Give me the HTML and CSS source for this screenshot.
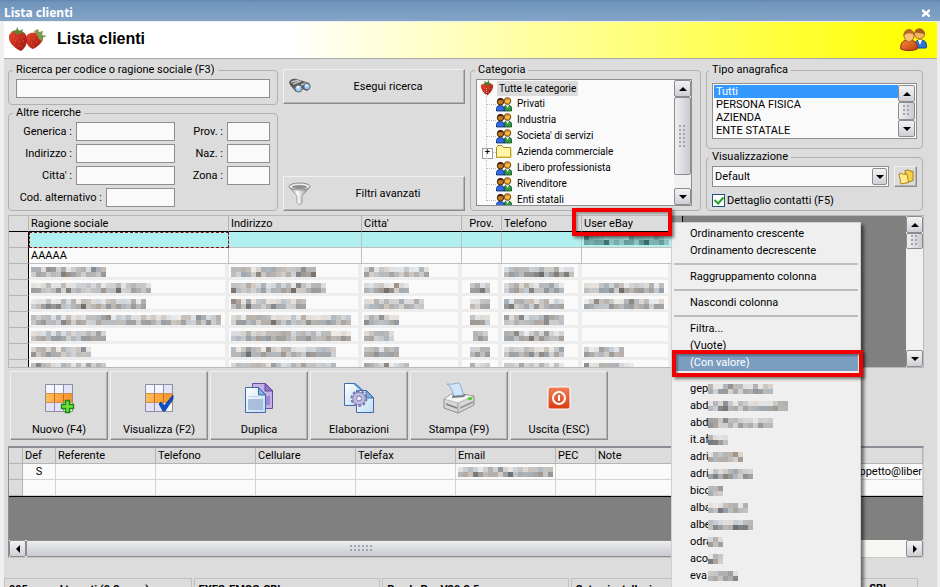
FILE: index.html
```html
<!DOCTYPE html>
<html lang="it">
<head>
<meta charset="utf-8">
<title>Lista clienti</title>
<link rel="stylesheet" href="styles.css">
</head>
<body>
<svg class="defs" aria-hidden="true">
  <defs>
    <linearGradient id="berry" x1="0" y1="0" x2="1" y2="1"><stop offset="0" stop-color="#e8492c"/><stop offset="1" stop-color="#9c1410"/></linearGradient>
    <linearGradient id="org" x1="0" y1="0" x2="1" y2="1"><stop offset="0" stop-color="#f58a3c"/><stop offset="1" stop-color="#c23c0c"/></linearGradient>
    <linearGradient id="cell" x1="0" y1="0" x2="1" y2="0"><stop offset="0" stop-color="#ffbf5a"/><stop offset="1" stop-color="#f98f2a"/></linearGradient>
    <linearGradient id="page" x1="0" y1="0" x2="1" y2="1"><stop offset="0" stop-color="#ffffff"/><stop offset="1" stop-color="#bcdcf5"/></linearGradient>
    <linearGradient id="metal" x1="0" y1="0" x2="1" y2="0"><stop offset="0" stop-color="#888"/><stop offset=".4" stop-color="#fff"/><stop offset="1" stop-color="#777"/></linearGradient>
    <linearGradient id="power" x1="0" y1="0" x2="0" y2="1"><stop offset="0" stop-color="#f0805c"/><stop offset="1" stop-color="#d93a10"/></linearGradient>
    <symbol id="i-people" viewBox="0 0 16 16">
      <path d="M8 15V12c0-2 1.500-3 3.500-3s4 1 4 3v3z" fill="#2f9a3c" stroke="#134a1c" stroke-width=".8"/>
      <path d="M10 9l1.500 3L13 9z" fill="#fff"/>
      <circle cx="11.500" cy="5" r="3.300" fill="#f5b23c" stroke="#5a3606" stroke-width=".9"/>
      <path d="M8.200 4c.5-3 6-3.500 6.600 0-2-1.200-4.500-1-6.600 0z" fill="#b87414"/>
      <path d="M.5 15v-2.500C.5 10.500 2 9.500 4.200 9.500s4 1 4 3V15z" fill="#2f6be8" stroke="#10246a" stroke-width=".8"/>
      <circle cx="4.500" cy="5.800" r="3.200" fill="#c4761c" stroke="#2c1804" stroke-width=".9"/>
      <path d="M1.200 5c.2-3.800 6-4 6.600-.4-2-.9-4.500-.7-6.600.4z" fill="#3c2208"/>
    </symbol>
    <symbol id="i-berry" viewBox="0 0 14 16">
      <path d="M1 5c2-2 10-2 12 0 1 3-2.500 8.500-6 10.500C3.500 13.500 0 8 1 5z" fill="url(#berry)"/>
      <path d="M2 4.500l3-1.500-1-2 3 1.500L9 0l.3 3 3 1-3 .3L7 6 5.500 4.500z" fill="#4b7a2c"/>
      <path d="M4 8h1M8 8h1M6 10.500h1M10 9h1M4 11h1M8 12.500h1" stroke="#e06a50" stroke-width=".8"/>
    </symbol>
    <symbol id="i-grid" viewBox="0 0 28 28">
      <path d="M.5.500h27v27H.500z" fill="#f4f5ff"/>
      <path d="M18 1h9v8h-9zM1 19h9v8H1zM10 19h9v8h-9z" fill="#e2e3fa"/>
      <path d="M.500 9.500h27v9H.500z" fill="url(#cell)"/>
      <path d="M9.500 10v8M18.500 10v8" stroke="#c86a10"/>
      <path d="M.5.500h27v27H.500zM9.500 1v8M18.500 1v8M9.500 19v8M18.500 19v8" fill="none" stroke="#8e8e9c"/>
      <path d="M0 9.500h28M0 18.500h28" stroke="#c89058"/>
    </symbol>
  </defs>
</svg>

<div class="window">
  <header class="titlebar">
    <span>Lista clienti</span>
    <button class="close" aria-label="Chiudi"><svg width="8" height="8" viewBox="0 0 8 8"><path d="M0 1l8 6.500M8 1l-8 6.500" stroke="#fff" stroke-width="2.400"/></svg></button>
  </header>

  <main class="client">
    <div class="banner">
      <svg width="38" height="26" viewBox="0 0 38 26" aria-hidden="true">
        <path d="M18 9c4-4 14-3 16 1 1 5-5 11-10 13-5-1-9-9-6-14z" fill="url(#berry)"/>
        <path d="M25 5l4-2 1 3 4-1-1 4 5 1-5 2 1 4-4-3-2-4z" fill="#7f9a4c"/>
        <path d="M0 10c2-7 14-7 17-1 3 6 0 12-5 16C7 23-1 17 0 10z" fill="url(#berry)"/>
        <path d="M2 6l4-2 1 1 1-4 2 4 4-2-1 3 4 3-5-2-3 2-2-2z" fill="#5c8434"/>
        <path d="M4 11h1M8 12h1M13 11h1M6 15h1M10 16h1M14 15h1M9 20h1M12 20h1M20 13h1M24 13h1M22 17h1M27 16h1M24 20h1" stroke="#e4664a"/>
      </svg>
      <h1>Lista clienti</h1>
      <svg width="27" height="24" viewBox="0 0 27 24" aria-hidden="true">
        <path d="M15 21v-5c1-4 10-4 11 0 .8 2 .8 4 0 5z" fill="#2f74d0" stroke="#15479a"/>
        <path d="M18 13l2 5 2-5z" fill="#fff"/>
        <circle cx="19.500" cy="7" r="5" fill="#f3b867" stroke="#a8651c"/>
        <path d="M14.500 6c0-6 10-6 10.200 1-3 0-6-2-10.200-1z" fill="#a5611a"/>
        <path d="M.800 22c-.6-7 3-9 8-9s9 2 8.400 9c-4 2-12 2-16.400 0z" fill="url(#org)" stroke="#8c2808"/>
        <ellipse cx="9" cy="8.500" rx="5" ry="6" fill="#f9c078" stroke="#b26a20"/>
        <path d="M3.500 9C3 0 15 0 14.600 9 13 5.500 7 5 3.500 9z" fill="#b86b22"/>
      </svg>
    </div>

    <div class="filters">
      <div class="col spread">
        <fieldset class="group ricerca">
          <legend><label for="q">Ricerca per codice o ragione sociale (F3)</label></legend>
          <input id="q" type="text">
        </fieldset>
        <fieldset class="group altre">
          <legend>Altre ricerche</legend>
          <div class="pair"><label for="gen">Generica :</label><input id="gen" type="text"><label for="prov">Prov. :</label><input id="prov" type="text"></div>
          <div class="pair"><label for="ind">Indirizzo :</label><input id="ind" type="text"><label for="naz">Naz. :</label><input id="naz" type="text"></div>
          <div class="pair"><label for="cit">Citta' :</label><input id="cit" type="text"><label for="zona">Zona :</label><input id="zona" type="text"></div>
          <div class="pair wide"><label for="cod">Cod. alternativo :</label><input id="cod" type="text"></div>
        </fieldset>
      </div>

      <div class="col spread actions">
        <button class="btn row-btn">
          <svg width="24" height="18" viewBox="0 0 24 18" aria-hidden="true">
            <path d="M1 4c1-3 5-4 8-3l9 3c3 0 5 3 4 6l-3 3-5-2-3 3H8L2 7z" fill="#5a5a5a"/>
            <path d="M3 4l8-2M5 6l8-3M13 7l5-2" stroke="#c4c4c4" stroke-width="1.400"/>
            <circle cx="10.500" cy="10.500" r="3.600" fill="#9cc8fa" stroke="#666"/><circle cx="19" cy="8.500" r="3.200" fill="#9cc8fa" stroke="#666"/>
            <circle cx="10" cy="9.500" r="1.400" fill="#e8f4ff"/><circle cx="18.500" cy="7.500" r="1.200" fill="#e8f4ff"/>
          </svg>
          <span>Esegui ricerca</span>
        </button>
        <button class="btn row-btn">
          <svg width="24" height="24" viewBox="0 0 24 24" aria-hidden="true">
            <path d="M1 5l8 9v7c1 2 4 2 5 0v-7l8-9z" fill="url(#metal)" stroke="#777" stroke-width=".6"/>
            <ellipse cx="11.500" cy="4.500" rx="10.500" ry="3.500" fill="#eee" stroke="#888"/>
            <ellipse cx="11.500" cy="5" rx="7.500" ry="2" fill="#8f8f8f"/>
          </svg>
          <span>Filtri avanzati</span>
        </button>
      </div>

      <div class="col">
        <fieldset class="group categoria">
          <legend>Categoria</legend>
          <div class="tree-box">
            <ul class="tree">
              <li class="root"><svg width="14" height="16"><use href="#i-berry"/></svg><span class="sel">Tutte le categorie</span></li>
              <li><svg width="16" height="16"><use href="#i-people"/></svg><span>Privati</span></li>
              <li><svg width="16" height="16"><use href="#i-people"/></svg><span>Industria</span></li>
              <li><svg width="16" height="16"><use href="#i-people"/></svg><span>Societa' di servizi</span></li>
              <li class="closed"><svg width="16" height="16" viewBox="0 0 16 16"><path d="M.5 13.500v-10l1.500-2h4l1.500 2h7v10z" fill="#fff6a8" stroke="#a08c20"/><path d="M2 13h13V5" fill="none" stroke="#d8bc40"/></svg><span>Azienda commerciale</span></li>
              <li><svg width="16" height="16"><use href="#i-people"/></svg><span>Libero professionista</span></li>
              <li><svg width="16" height="16"><use href="#i-people"/></svg><span>Rivenditore</span></li>
              <li><svg width="16" height="16"><use href="#i-people"/></svg><span>Enti statali</span></li>
            </ul>
            <div class="vbar"><button class="arrow up" aria-label="Su"></button><div class="thumb"></div><button class="arrow down" aria-label="Giu"></button></div>
          </div>
        </fieldset>
      </div>

      <div class="col spread">
        <fieldset class="group tipo">
          <legend><label for="tipo">Tipo anagrafica</label></legend>
          <div class="list-box">
            <select id="tipo" size="4"><option selected>Tutti</option><option>PERSONA FISICA</option><option>AZIENDA</option><option>ENTE STATALE</option></select>
            <div class="vbar"><button class="arrow up" aria-label="Su"></button><div class="thumb"></div><button class="arrow down" aria-label="Giu"></button></div>
          </div>
        </fieldset>
        <fieldset class="group vis">
          <legend><label for="vis">Visualizzazione</label></legend>
          <div class="vis-row">
            <div class="combo"><select id="vis"><option>Default</option></select><span class="arrow down"></span></div>
            <button class="btn folder" aria-label="Apri"><svg width="16" height="16" viewBox="0 0 16 16"><path d="M7 1.500l4-.5 1 1 3 .5v9L8 14z" fill="#f3cf4a" stroke="#a8800c"/><path d="M1 5l3-.5 1.500 1L9 5l1.500 8.500L3 15z" fill="#ffe98a" stroke="#b08a14"/></svg></button>
          </div>
          <label class="check"><input type="checkbox" checked>Dettaglio contatti (F5)</label>
        </fieldset>
      </div>
    </div>

    <section class="grid-box main-grid">
      <table>
        <colgroup><col class="c-h"><col class="c-rag"><col class="c-ind"><col class="c-cit"><col class="c-prov"><col class="c-tel"><col class="c-user"></colgroup>
        <thead><tr><th></th><th>Ragione sociale</th><th>Indirizzo</th><th>Citta'</th><th class="mid">Prov.</th><th>Telefono</th><th>User eBay</th></tr></thead>
        <tbody>
          <tr class="current"><th></th><td class="focus"></td><td></td><td></td><td></td><td></td><td><i class="mosaic teal" data-cells="17"></i></td></tr>
          <tr><th></th><td>AAAAA</td><td></td><td></td><td></td><td></td><td></td></tr>
          <tr class="soft"><th></th><td><i class="mosaic" data-cells="15"></i></td><td><i class="mosaic" data-cells="17"></i></td><td><i class="mosaic" data-cells="13"></i></td><td></td><td><i class="mosaic" data-cells="14"></i></td><td></td></tr>
          <tr class="soft"><th></th><td><i class="mosaic" data-cells="24"></i></td><td><i class="mosaic" data-cells="19"></i></td><td><i class="mosaic" data-cells="9"></i></td><td class="mid"><i class="mosaic" data-cells="4"></i></td><td><i class="mosaic" data-cells="12"></i></td><td><i class="mosaic" data-cells="16"></i></td></tr>
          <tr class="soft"><th></th><td><i class="mosaic" data-cells="23"></i></td><td><i class="mosaic" data-cells="15"></i></td><td><i class="mosaic" data-cells="12"></i></td><td class="mid"><i class="mosaic" data-cells="4"></i></td><td><i class="mosaic" data-cells="12"></i></td><td><i class="mosaic" data-cells="16"></i></td></tr>
          <tr class="soft"><th></th><td><i class="mosaic" data-cells="38"></i></td><td><i class="mosaic" data-cells="24"></i></td><td><i class="mosaic" data-cells="7"></i></td><td class="mid"><i class="mosaic" data-cells="4"></i></td><td><i class="mosaic" data-cells="12"></i></td><td></td></tr>
          <tr class="soft"><th></th><td><i class="mosaic" data-cells="15"></i></td><td><i class="mosaic" data-cells="24"></i></td><td><i class="mosaic" data-cells="6"></i></td><td class="mid"><i class="mosaic" data-cells="3"></i></td><td><i class="mosaic" data-cells="12"></i></td><td></td></tr>
          <tr class="soft"><th></th><td><i class="mosaic" data-cells="12"></i></td><td><i class="mosaic" data-cells="21"></i></td><td><i class="mosaic" data-cells="7"></i></td><td class="mid"><i class="mosaic" data-cells="4"></i></td><td><i class="mosaic" data-cells="12"></i></td><td><i class="mosaic" data-cells="8"></i></td></tr>
          <tr class="soft"><th></th><td><i class="mosaic" data-cells="15"></i></td><td><i class="mosaic" data-cells="21"></i></td><td><i class="mosaic" data-cells="9"></i></td><td class="mid"><i class="mosaic" data-cells="4"></i></td><td><i class="mosaic" data-cells="12"></i></td><td><i class="mosaic" data-cells="10"></i></td></tr>
        </tbody>
      </table>
      <div class="void"></div>
      <div class="vbar"><button class="arrow up" aria-label="Su"></button><div class="thumb"></div><button class="arrow down" aria-label="Giu"></button></div>
    </section>

    <nav class="toolbar">
      <button class="btn tool"><svg width="32" height="32" viewBox="0 0 32 32"><svg x="2" y="2" width="28" height="28"><use href="#i-grid"/></svg><path d="M22.500 18.500h4v4h4v4h-4v4h-4v-4h-4v-4h4z" fill="#6ee03c" stroke="#178a10" stroke-width="1.400"/></svg><span>Nuovo (F4)</span></button>
      <button class="btn tool"><svg width="32" height="32" viewBox="0 0 32 32"><svg x="2" y="2" width="28" height="28"><use href="#i-grid"/></svg><path d="M16 22l2-2 3 4 9-11v4l-8 12h-2z" fill="#0c50c8" stroke="#083a94" stroke-width=".8"/></svg><span>Visualizza (F2)</span></button>
      <button class="btn tool"><svg width="32" height="32" viewBox="0 0 32 32"><path d="M9.500 1.500h13l7 7v18h-20z" fill="#c3b0e6" stroke="#6a4aa0"/><path d="M22 1.500V9h8z" fill="#9274cc" stroke="#6a4aa0"/><path d="M22 14h5v9h-5z" fill="#9a86d4"/><path d="M2.500 5.500h13l7 7v18h-20z" fill="url(#page)" stroke="#4468a8"/><path d="M15.500 5.500V13h7z" fill="#7cb4dc" stroke="#4468a8"/><path d="M5 14h10v1H5z" fill="#c9d3e8"/><path d="M5 17h15v11H5z" fill="#a8bedc"/></svg><span>Duplica</span></button>
      <button class="btn tool"><svg width="32" height="32" viewBox="0 0 32 32"><path d="M1.500 1.500h10l6 6v16h-16z" fill="url(#page)" stroke="#4468a8"/><path d="M11.500 1.500l11 10" stroke="#4a90c8" stroke-width="2"/><path d="M13.500 8.500h10l7 7v15h-17z" fill="url(#page)" stroke="#4468a8"/><path d="M23 8.500V16h7.500z" fill="#7cb4dc" stroke="#4468a8"/><circle cx="16" cy="16.500" r="7" fill="none" stroke="#7a78a8" stroke-width="3" stroke-dasharray="2.700 1.700"/><circle cx="16" cy="16.500" r="6.300" fill="#bcbae0" stroke="#8a88b8"/><circle cx="16" cy="16.500" r="2.500" fill="#eef" stroke="#7a78a8"/></svg><span>Elaborazioni</span></button>
      <button class="btn tool"><svg width="32" height="32" viewBox="0 0 32 32"><path d="M1 17l9-6 21 3v9l-16 8-14-5z" fill="#d8d8d8" stroke="#777" stroke-width=".8"/><path d="M1 17l9-6 21 3-16 7z" fill="#f4f4f4" stroke="#999" stroke-width=".6"/><path d="M15 21v9.500" stroke="#999"/><path d="M3 21l11 4v2L3 23z" fill="#888"/><path d="M17 25l13-6v2l-13 6z" fill="#999"/><path d="M9 16l12-1 2-3-13-1z" fill="#777"/><path d="M4 2c5 1 8-1 12-1 3 3 2 8 5 12l-10 1C9 10 9 5 4 2z" fill="#cfe6fa" stroke="#7b9cc0" stroke-width=".8"/><ellipse cx="27" cy="16.500" rx="2.400" ry="1.600" fill="#4cd028"/></svg><span>Stampa (F9)</span></button>
      <button class="btn tool"><svg width="32" height="32" viewBox="0 0 32 32"><rect x="5" y="5" width="22" height="22" rx="2" fill="url(#power)" stroke="#fff"/><circle cx="16" cy="16" r="6" fill="none" stroke="#fff" stroke-width="2"/><path d="M16 13v6" stroke="#fff" stroke-width="2"/></svg><span>Uscita (ESC)</span></button>
    </nav>

    <section class="grid-box contacts">
      <table>
        <colgroup><col class="d-h"><col class="d-def"><col class="d-std"><col class="d-std"><col class="d-std"><col class="d-std"><col class="d-std"><col class="d-pec"><col></colgroup>
        <thead><tr><th></th><th>Def</th><th>Referente</th><th>Telefono</th><th>Cellulare</th><th>Telefax</th><th>Email</th><th>PEC</th><th>Note</th></tr></thead>
        <tbody>
          <tr><th></th><td class="mid">S</td><td></td><td></td><td></td><td></td><td><i class="mosaic" data-cells="19"></i></td><td></td><td class="end">geppetto@liber</td></tr>
          <tr><th></th><td></td><td></td><td></td><td></td><td></td><td></td><td></td><td></td></tr>
        </tbody>
      </table>
      <div class="void"></div>
      <div class="hbar"><button class="arrow left" aria-label="Sinistra"></button><div class="thumb"></div><div class="rest"></div><button class="arrow right" aria-label="Destra"></button></div>
    </section>

    <footer class="status"><span>995 record trovati (0.2 secs)</span><span>EXES-EMOS-SRL</span><span>Ready Pro V20.2.5</span><span>Setup installazione</span><span class="tail">SRL</span></footer>
  </main>

  <ul class="menu" role="menu">
    <li><button>Ordinamento crescente</button></li>
    <li><button>Ordinamento decrescente</button></li>
    <li class="sep"></li>
    <li><button>Raggruppamento colonna</button></li>
    <li class="sep"></li>
    <li><button>Nascondi colonna</button></li>
    <li class="sep"></li>
    <li><button>Filtra...</button></li>
    <li><button>(Vuote)</button></li>
    <li><button class="active">(Con valore)</button></li>
    <li class="sep"></li>
    <li><button><b>gep</b><i class="mosaic" data-cells="13"></i></button></li>
    <li><button><b>abd</b><i class="mosaic" data-cells="16"></i></button></li>
    <li><button><b>abd</b><i class="mosaic" data-cells="13"></i></button></li>
    <li><button><b>it.af</b><i class="mosaic" data-cells="4"></i></button></li>
    <li><button><b>adri</b><i class="mosaic" data-cells="7"></i></button></li>
    <li><button><b>adri</b><i class="mosaic" data-cells="9"></i></button></li>
    <li><button><b>bico</b><i class="mosaic" data-cells="3"></i></button></li>
    <li><button><b>alba</b><i class="mosaic" data-cells="8"></i></button></li>
    <li><button><b>albe</b><i class="mosaic" data-cells="9"></i></button></li>
    <li><button><b>odra</b><i class="mosaic" data-cells="3"></i></button></li>
    <li><button><b>aco</b><i class="mosaic" data-cells="3"></i></button></li>
    <li><button><b>eva</b><i class="mosaic" data-cells="6"></i></button></li>
  </ul>
  <div class="mark mark-column"></div>
  <div class="mark mark-item"></div>
</div>
<script src="mosaic.js"></script>
</body>
</html>
```
FILE: styles.css
```css
:root {
  --face: #dcdcdc;
  --line: #b0b0b0;
  --paper: #fafafa;
  --void: #808080;
}
* { box-sizing: border-box; }
body {
  margin: 0;
  font: 11px/14px Roboto, sans-serif;
  color: #000;
  background: #efefef;
}
button, input, select { font: inherit; color: inherit; margin: 0; border-radius: 0; }
button { padding: 0; }
ul { list-style: none; margin: 0; padding: 0; }
svg { display: block; flex: none; }
.defs { position: absolute; width: 0; height: 0; }

.window { position: relative; height: 100vh; overflow: hidden; display: flex; flex-direction: column; }
.titlebar {
  flex: none; height: 21px; padding: 5px 8px 0 4px;
  display: flex; justify-content: space-between; align-items: center;
  background: linear-gradient(#5f86ae, #6f94bb 2px, #84a4c8);
  color: #fff; font: bold 12px/14px "Noto Sans", sans-serif;
}
.close { width: 10px; height: 12px; border: 0; background: none; }
.client {
  flex: 1; min-height: 0; margin: 1px 3px 0 4px; background: var(--face);
  display: flex; flex-direction: column;
}
.banner {
  flex: none; height: 37px; padding: 0 10px 2px 5px;
  display: flex; align-items: center; gap: 10px;
  background: linear-gradient(90deg, #fff 30%, #ffff80 66%, #ff0 98%);
  border-bottom: 1px solid #a8a8a8;
}
.banner h1 { flex: 1; margin: 0; font: bold 16px/20px "Liberation Sans", sans-serif; }

.filters {
  flex: none; padding: 4px 14px 0 4px; gap: 5px;
  display: grid; grid-template-columns: 270fr 182fr 231fr 217fr;
}
.col { display: flex; flex-direction: column; min-width: 0; }
.spread { justify-content: space-between; }
.group { margin: 0; padding: 2px 7px 0; min-width: 0; border: 1px solid var(--line); border-radius: 4px; }
.group legend { padding: 0 3px; margin-left: -3px; line-height: 14px; }
input[type="text"] {
  width: 100%; min-width: 0; height: 19px; padding: 0 3px; display: block;
  border: 1px solid #8f8f8f; background: var(--paper);
}
.ricerca { padding-bottom: 6px; }
.altre { padding-bottom: 3px; }
.pair { display: grid; grid-template-columns: 56px 99px 1fr 43px; column-gap: 4px; align-items: center; text-align: right; margin-bottom: 3px; white-space: nowrap; }
.pair:last-child { margin-bottom: 0; }
.wide { grid-template-columns: 86px 69px; }

.btn {
  background: var(--face); border: 1px solid; border-color: #f0f0f0 #8c8c8c #8c8c8c #f0f0f0;
  box-shadow: inset -1px -1px #b4b4b4;
}
.actions { padding-top: 6px; }
.row-btn { height: 35px; padding: 0 0 0 4px; display: flex; align-items: center; }
.row-btn span { flex: 1; text-align: center; }

.categoria { flex: 1; padding: 2px 8px 4px 5px; }
.categoria legend { margin-left: -1px; }
.tree-box { display: flex; height: 127px; border: 1px solid #8f8f8f; background: var(--paper); overflow: hidden; }
.tree { flex: 1; padding: 0 1px; }
.tree li { position: relative; display: flex; align-items: center; height: 16px; padding-left: 18px; gap: 5px; }
.tree li:not(.root)::before {
  content: ""; position: absolute; left: 8px; top: -8px; width: 9px; height: 16px;
  border: dotted #bbb; border-width: 0 0 1px 1px;
}
.tree li.root { padding-left: 2px; gap: 3px; }
.tree .sel { background: var(--face); padding: 0 2px; line-height: 15px; }
.tree span { font-size: 10px; }
.closed::after {
  content: "+"; position: absolute; left: 4px; top: 4px; width: 9px; height: 9px;
  border: 1px solid #9a9a9a; background: #fff; font: bold 9px/7px "Liberation Sans", sans-serif; text-align: center;
}

.vbar { flex: none; width: 17px; display: flex; flex-direction: column; background: #f1f1ef; }
.arrow {
  flex: none; width: 100%; height: 17px; display: grid; place-items: center;
  border: 1px solid #8c8c8c; border-radius: 2px; background: linear-gradient(#f3f3f5, #cfd0d6);
}
.arrow::before { content: ""; border: 4px solid transparent; }
.up::before { border-bottom-color: #000; border-top-width: 0; }
.down::before { border-top-color: #000; border-bottom-width: 0; }
.left::before { border-right-color: #000; border-left-width: 0; }
.right::before { border-left-color: #000; border-right-width: 0; }
.thumb {
  position: relative; border: 1px solid #8c8c8c; border-radius: 2px;
  background: linear-gradient(90deg, #efeff2, #c9cbd2);
}
.thumb::after {
  content: ""; position: absolute; inset: 0; margin: auto; width: 8px; height: 22px; max-height: 12px;
  background: radial-gradient(circle at 1px 1px, #a4a6ae 1px, transparent 1px) 0 0 / 4px 4px;
}
.vbar .down { margin-top: auto; }
.tree-box .thumb { height: 78px; }
.tree-box .thumb::after { max-height: none; }

.tipo { padding: 6px 5px 9px; }
.list-box { display: flex; height: 56px; padding: 1px; border: 1px solid #8f8f8f; background: var(--paper); }
.list-box select { flex: 1; min-width: 0; border: 0; padding: 0; background: none; overflow: hidden; outline: none; }
.list-box select::-webkit-scrollbar { display: none; }
.list-box option { height: 13px; min-height: 0; padding: 0 2px; line-height: 13px; }
.list-box option:checked { background: #3399ff linear-gradient(#3399ff, #3399ff); color: #fff; -webkit-text-fill-color: #fff; }
.list-box .thumb { flex: 1; }

.vis { padding: 2px 5px 3px; }
.vis-row { display: flex; gap: 5px; }
.combo { position: relative; flex: 1; display: flex; }
.combo select {
  flex: 1; height: 21px; padding: 0 2px; appearance: none;
  border: 1px solid #8f8f8f; background: var(--paper);
}
.combo .arrow { position: absolute; right: 2px; top: 2px; width: 15px; height: 17px; pointer-events: none; }
.folder { width: 23px; height: 21px; display: grid; place-items: center; }
.check { display: flex; align-items: center; gap: 2px; margin-top: 7px; height: 13px; }
.check input {
  appearance: none; width: 13px; height: 13px; border: 1px solid #1c5180; background: #fff;
  display: grid; place-items: center;
}
.check input:checked::before {
  content: ""; width: 4px; height: 7px; margin-top: -2px; transform: rotate(42deg);
  border: solid #21a121; border-width: 0 2px 2px 0;
}

.grid-box { flex: none; margin-left: 4px; border: 1px solid #b8b8b8; background: var(--void); overflow: hidden; }
table { border-collapse: separate; border-spacing: 0; table-layout: fixed; }
th, td { height: 16px; padding: 0 2px; line-height: 14px; text-align: left; font-weight: normal; white-space: nowrap; overflow: hidden; vertical-align: middle; }
td { background: var(--paper); border: solid #c0c0c0; border-width: 0 1px 1px 0; }
th { background: var(--face); border: solid #b4b4b4; border-width: 0 1px 1px 0; }
.mid { text-align: center; }
.mosaic { display: block; }
.mid .mosaic svg { margin: 0 auto; }

.main-grid { display: flex; height: 153px; margin-top: 4px; margin-right: 13px; background: linear-gradient(90deg, var(--face) 50%, var(--void) 80%); }
.main-grid table { flex: none; width: 663px; align-self: flex-start; }
.main-grid thead th { border-bottom-color: #000; }
.main-grid tbody th { border-right-color: #000; }
.main-grid .void { flex: 1; margin-left: 10px; border-left: 1px solid #000; background: var(--void); }
.main-grid .thumb { height: 16px; }
.c-h { width: 20px; } .c-rag { width: 200px; } .c-ind { width: 133px; } .c-cit { width: 100px; }
.c-prov { width: 40px; } .c-tel { width: 80px; } .c-user { width: 90px; }
.current td { background: #b0f0f0; }
.current .focus { outline: 1px dashed #7a1010; outline-offset: -1px; }
.soft td { border-color: #ededed; border-width: 0 4px 3px 0; vertical-align: bottom; }

.toolbar { flex: none; display: flex; gap: 2px; margin: 3px 0 0 6px; }
.tool { width: 98px; height: 69px; padding: 10px 0 2px; display: flex; flex-direction: column; align-items: center; justify-content: space-between; }

.contacts { margin-top: 6px; margin-right: 13px; border-color: #8c8c94 #c8c8c8 #c8c8c8 #8c8c94; border-top-width: 2px; }
.contacts table { width: 100%; border-bottom: 1px solid #000; }
.contacts td { border-color: #d4d4d4; }
.contacts .void { height: 43px; }
.d-h { width: 14px; } .d-def { width: 33px; } .d-std { width: 100px; } .d-pec { width: 40px; }
.contacts .end { text-align: right; padding-right: 0; }
.hbar { display: flex; height: 17px; background: #f6f6f2; }
.hbar .arrow { width: 17px; }
.hbar .thumb { flex: 672; background: linear-gradient(#ecedf0, #c9cbd2); }
.hbar .thumb::after { width: 24px; height: 8px; }
.hbar .rest { flex: 208; }

.status { flex: none; display: grid; grid-template-columns: 188fr 187fr 187fr 348fr; gap: 2px; margin-top: 20px; padding-right: 19px; font-weight: bold; position: relative; }
.status span { height: 20px; padding: 4px 4px 0; white-space: nowrap; border: 1px solid #c0c0c0; border-bottom: 0; }
.status .tail { position: absolute; right: 44px; border: 0; }

.menu {
  position: absolute; left: 671px; top: 222px; width: 190px; height: 400px; padding: 2px 2px 0;
  background: #efefef; border: 1px solid #d0d0d0; box-shadow: 3px 3px 3px rgba(0, 0, 0, .5);
}
.menu button { width: 100%; height: 17px; padding: 0 0 0 16px; display: flex; align-items: center; border: 0; background: none; text-align: left; }
.menu .active { background: #7b9dc0; color: #fff; }
.menu b { width: 18px; font-weight: normal; overflow: hidden; }
.sep { height: 9px; padding-top: 4px; }
.sep::before { content: ""; display: block; border-top: 2px solid #bdbdbd; }
.mark { position: absolute; border: 4px solid #f00000; box-shadow: 2px 2px 3px rgba(0, 0, 0, .5), inset 2px 2px 2px rgba(0, 0, 0, .3); pointer-events: none; }
.mark-column { left: 572px; top: 208px; width: 100px; height: 28px; }
.mark-item { left: 672px; top: 350px; width: 191px; height: 27px; }
```
FILE: mosaic.js
```js
(function () {
  var NS = "http://www.w3.org/2000/svg";
  var SIZE = 5;
  var seed = 7;
  function next() {
    seed = (seed * 16807) % 2147483647;
    return seed / 2147483647;
  }
  document.querySelectorAll(".mosaic").forEach(function (el) {
    var cells = Number(el.dataset.cells);
    var teal = el.classList.contains("teal");
    var svg = document.createElementNS(NS, "svg");
    svg.setAttribute("width", cells * SIZE);
    svg.setAttribute("height", SIZE * 2);
    svg.setAttribute("shape-rendering", "crispEdges");
    for (var y = 0; y < 2; y++) {
      for (var x = 0; x < cells; x++) {
        var r = document.createElementNS(NS, "rect");
        var tone = Math.round((y ? 150 : 175) + next() * 60 - (next() > 0.85 ? 40 : 0));
        var warm = Math.round(next() * 16 - 8);
        var rgb = teal
          ? [tone - 60, tone - 8, tone - 8]
          : [tone + warm, tone, tone - warm];
        r.setAttribute("x", x * SIZE);
        r.setAttribute("y", y * SIZE);
        r.setAttribute("width", SIZE);
        r.setAttribute("height", SIZE);
        r.setAttribute("fill", "rgb(" + rgb.join(",") + ")");
        svg.appendChild(r);
      }
    }
    el.appendChild(svg);
  });
})();
```
